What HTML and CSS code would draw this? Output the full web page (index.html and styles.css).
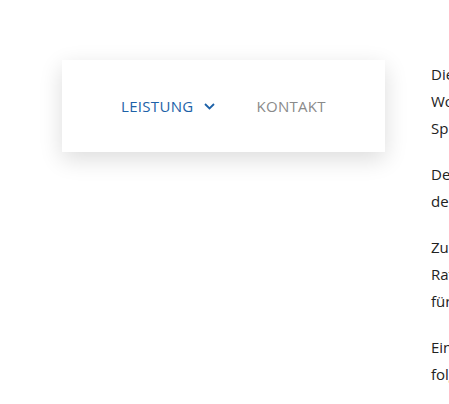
FILE: index.html
```html
<!DOCTYPE html>
<html lang="de">
<head>
  <meta charset="UTF-8" />
  <meta name="viewport" content="width=device-width, initial-scale=1.0" />
  <title>Leistung</title>
  <link rel="stylesheet" href="styles.css">
</head>
<body>
  <div class="page">
    <nav class="nav-card">
      <a class="nav-link active" href="#">LEISTUNG
        <svg class="chevron" width="11" height="7" viewBox="0 0 11 7"><path d="M1 1 L5.5 5.5 L10 1" fill="none" stroke="currentColor" stroke-width="1.8"/></svg>
      </a>
      <a class="nav-link" href="#">KONTAKT</a>
    </nav>

    <div class="content">
      <p>Die Webseite bietet Ihnen einen Überblick über unsere<br>Wohnungen, Häuser und Grundstücke in der Region<br>Sprechen Sie uns gerne an.</p>
      <p>Der Service ist für Sie kostenlos und unverbindlich,<br>denn wir arbeiten für Sie.</p>
      <p>Zu unseren Leistungen gehören Bewertung, Beratung<br>Rat und Tat bei allen Fragen rund um die Immobilie<br>für Käufer und Verkäufer.</p>
      <p>Ein persönliches Gespräch vereinbaren Sie über die<br>folgenden Kontaktmöglichkeiten.</p>
    </div>
  </div>
</body>
</html>
```

FILE: styles.css
```css
body {
  margin: 0;
  font-family: 'Open Sans', sans-serif;
  background-color: #fff;
  overflow: hidden;
}

.page {
  display: flex;
  align-items: flex-start;
  gap: 46px;
  padding: 60px 0 0 62px;
  width: 1000px;
}

.nav-card {
  flex-shrink: 0;
  width: 323px;
  height: 92px;
  box-sizing: border-box;
  background: #fff;
  box-shadow: 0 7px 22px rgba(0,0,0,0.14);
  display: flex;
  align-items: center;
  justify-content: center;
  gap: 41px;
}

.nav-link {
  display: flex;
  align-items: center;
  gap: 11px;
  font-size: 15px;
  letter-spacing: 0.3px;
  color: #8a8a8a;
  text-decoration: none;
}

.nav-link.active {
  color: #1d62a8;
}

.chevron {
  color: #1d62a8;
}

.content {
  flex-shrink: 0;
  width: 420px;
  margin-top: 1px;
  font-size: 15px;
  line-height: 27px;
  color: #222;
}

.content p {
  margin: 0 0 19px;
  white-space: nowrap;
}
```
